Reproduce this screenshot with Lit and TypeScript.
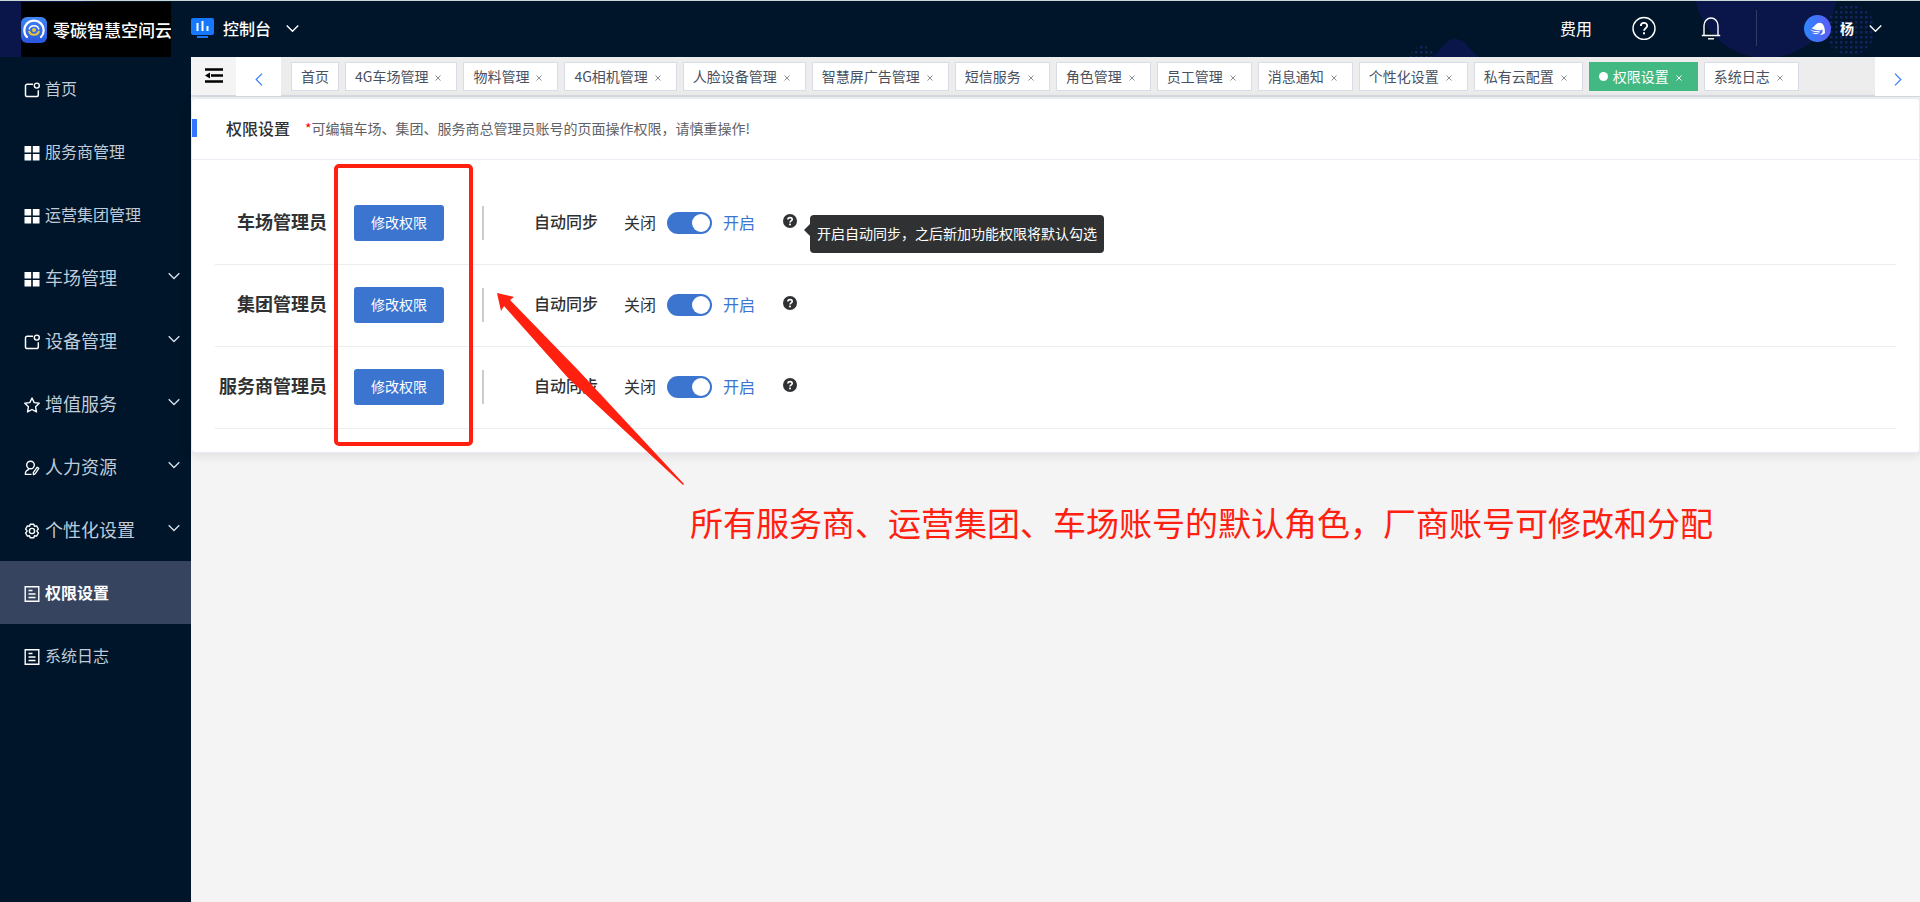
import { LitElement, html, css, svg, TemplateResult } from "lit";
import { customElement, property } from "lit/decorators.js";
import { classMap } from "lit/directives/class-map.js";

const icons: Record<string, TemplateResult> = {
  app: svg`<path d="M9 2.200H3.200a1.700 1.700 0 0 0-1.700 1.700v9a1.700 1.700 0 0 0 1.700 1.700h9.400a1.700 1.700 0 0 0 1.700-1.700V8.200" fill="none" stroke="currentColor" stroke-width="1.500"/><circle cx="12.800" cy="3.600" r="2.500" fill="none" stroke="currentColor" stroke-width="1.400"/>`,
  grid: svg`<path d="M.5 1h6.700v6.500H.5zM8.800 1h6.700v6.500H8.800zM.5 9h6.700v6.500H.5zM8.800 9h6.700v6.500H8.800z" fill="currentColor"/>`,
  star: svg`<path d="M8 1l2.200 4.600 5 .7-3.600 3.500.9 5.100L8 12.500l-4.500 2.400.9-5.100L.8 6.300l5-.7z" fill="none" stroke="currentColor" stroke-width="1.400" stroke-linejoin="round"/>`,
  person: svg`<circle cx="6.500" cy="5" r="3.800" fill="none" stroke="currentColor" stroke-width="1.400"/><path d="M5 9.300C2.600 10 1.300 11.800 1.300 14.300H7.500M13.200 7.200l1.600 1.100-3.500 5.300-1.900 1.100-.1-2z" fill="none" stroke="currentColor" stroke-width="1.300" stroke-linejoin="round"/>`,
  gear: svg`<path d="M6.200 1.200h3.600l.7 2 2.100-.3 1.800 3.100L13 7.600v.8l1.400 1.600-1.800 3.100-2.100-.3-.7 2H6.200l-.7-2-2.100.3L1.600 10 3 8.400v-.8L1.600 6l1.800-3.100 2.100.3z" fill="none" stroke="currentColor" stroke-width="1.400" stroke-linejoin="round"/><circle cx="8" cy="8" r="2.600" fill="none" stroke="currentColor" stroke-width="1.400"/>`,
  doc: svg`<path d="M1.200.8h13.600v14.400H1.200z" fill="none" stroke="currentColor" stroke-width="1.400"/><path d="M4.500 4.500h4M4.500 8h7M4.500 11.500h7" fill="none" stroke="currentColor" stroke-width="1.400"/>`,
};

const chevron = html`<svg class="chevron" viewBox="0 0 12 8" aria-hidden="true"><path d="M.7 1.200L6 6.500l5.300-5.300" fill="none" stroke="currentColor" stroke-width="1.300"/></svg>`;

const font = css`"Noto Sans CJK SC", "Microsoft YaHei", sans-serif`;

const reset = css`
  :host { display: block; font-family: ${font}; }
  * { box-sizing: border-box; }
  button { font: inherit; border: 0; padding: 0; background: none; color: inherit; cursor: pointer; }
  a { color: inherit; text-decoration: none; }
  svg { display: block; flex: none; }
`;

@customElement("top-bar")
class TopBar extends LitElement {
  static styles = [reset, css`
    .bar { position: relative; display: flex; align-items: center; height: 57px; background: #001529; color: #fff; border-top: 1px solid #c9d8d6; overflow: hidden; }
    .backdrop { position: absolute; right: 0; top: 0; width: 540px; height: 56px; }
    .brand { display: flex; width: 191px; height: 56px; padding: 1px 20px 0 21px; background: linear-gradient(90deg, #0a164a 85px, #001529 85px); }
    .logo { display: flex; align-items: center; gap: 6px; width: 150px; background: #000; font-size: 17px; line-height: 24px; font-weight: 500; white-space: nowrap; overflow: hidden; }
    .logo svg { width: 26px; height: 26px; }
    .console { display: flex; align-items: center; gap: 9px; padding-bottom: 2px; font-size: 16px; line-height: 24px; font-weight: 500; }
    .console .screen { width: 23px; height: 20px; }
    .chevron { width: 13px; height: 9px; }
    .console .chevron { margin-left: 6px; }
    .tools { position: relative; display: flex; align-items: center; margin-left: auto; padding: 0 38px 2px 0; font-size: 16px; line-height: 24px; }
    .help { margin-left: 40px; }
    .help svg { width: 24px; height: 24px; }
    .bell { margin-left: 45px; }
    .bell svg { width: 20px; height: 24px; }
    .rule { width: 1px; height: 36px; margin-left: 35px; background: #333b61; }
    .user { display: flex; align-items: center; margin-left: 47px; font-size: 14px; font-weight: 700; }
    .user span { margin: 0 15px 0 9px; }
    .user .face { width: 27px; height: 27px; }
  `];
  render() {
    return html`
      <header class="bar">
        <svg class="backdrop" viewBox="0 0 540 56" aria-hidden="true">
          <defs><pattern id="dots" width="5" height="5" patternUnits="userSpaceOnUse"><rect width="2.500" height="2.500" fill="#14235f"/></pattern></defs>
          <circle cx="386" cy="-15" r="72" fill="#0a164a"/>
          <circle cx="470" cy="29" r="25" fill="url(#dots)"/>
          <path d="M42 42l24 20H20z" fill="url(#dots)"/>
          <path d="M48 57C62 52 64 38 75 38s14 12 26 19z" fill="#0a164a"/>
        </svg>
        <div class="brand">
          <a class="logo" href="#home">
            <svg viewBox="0 0 26 26" aria-hidden="true">
              <defs><linearGradient id="lg" x2="0" y2="1"><stop stop-color="#3f86f3"/><stop offset="1" stop-color="#2a56dc"/></linearGradient></defs>
              <rect width="26" height="26" rx="6" fill="url(#lg)"/>
              <path d="M6 20A9.700 9.700 0 1 1 20 20" fill="none" stroke="#fff" stroke-width="2.200" stroke-linecap="round"/>
              <path d="M8 12.500a5.200 5.200 0 0 1 10 0" fill="none" stroke="#fff" stroke-width="1.400"/>
              <path d="M8 14a5.200 5.200 0 0 0 10 0" fill="none" stroke="#e8c53a" stroke-width="2.200"/>
              <circle cx="13" cy="13" r="2" fill="#e8c53a"/>
            </svg>
            零碳智慧空间云
          </a>
        </div>
        <button class="console">
          <svg class="screen" viewBox="0 0 23 20" aria-hidden="true">
            <rect width="23" height="17" rx="2" fill="#1677ff"/><rect x="6" y="18" width="11" height="2" fill="#1677ff"/>
            <path d="M6.500 5v8M11.500 3v10M16.500 8v5" stroke="#fff" stroke-width="2"/>
          </svg>
          控制台 ${chevron}
        </button>
        <div class="tools">
          <a href="#fees">费用</a>
          <button class="help" aria-label="帮助">
            <svg viewBox="0 0 24 24"><circle cx="12" cy="12.500" r="11" fill="none" stroke="#fff" stroke-width="1.400"/><path d="M8.800 10.100c0-4.200 6.400-4.200 6.400-.3 0 2.300-3.200 2.500-3.200 5" fill="none" stroke="#fff" stroke-width="1.800"/><rect x="11" y="16.300" width="2" height="2" fill="#fff"/></svg>
          </button>
          <button class="bell" aria-label="通知">
            <svg viewBox="0 0 20 24"><path d="M.8 19.500h18.400M3 19.500V9.500a7 7.500 0 0 1 14 0v10" fill="none" stroke="#fff" stroke-width="1.400"/><path d="M7 22.800h6" stroke="#fff" stroke-width="1.400"/></svg>
          </button>
          <i class="rule"></i>
          <button class="user">
            <svg class="face" viewBox="0 0 27 27" aria-hidden="true">
              <defs><linearGradient id="av" x2="1"><stop stop-color="#2f86ff"/><stop offset="1" stop-color="#5b5cf6"/></linearGradient></defs>
              <circle cx="13.500" cy="13.500" r="13.500" fill="url(#av)"/>
              <path d="M7.500 13C11 12 11.500 8 15.500 7.800c4 0 5.500 4.700 5.500 10.200-2 1.500-3 1.800-5.500 2 3-1.500 3.500-3.500 3-5.500-2.500 1.500-7 1-11-1.500z" fill="#fff"/>
              <path d="M6 14.200c3 1.700 7.500 2.600 11 1.300-2.500 2.500-8 2.300-11-1.300zM8 17.500c2.500 1 6 .7 8-.7-1.500 2.700-5.500 3.200-8 .7z" fill="#fff"/>
            </svg>
            <span>杨</span>${chevron}
          </button>
        </div>
      </header>`;
  }
}

interface Item { label: string; icon: string; children?: boolean; active?: boolean }

@customElement("side-menu")
class SideMenu extends LitElement {
  items: Item[] = [
    { label: "首页", icon: "app" },
    { label: "服务商管理", icon: "grid" },
    { label: "运营集团管理", icon: "grid" },
    { label: "车场管理", icon: "grid", children: true },
    { label: "设备管理", icon: "app", children: true },
    { label: "增值服务", icon: "star", children: true },
    { label: "人力资源", icon: "person", children: true },
    { label: "个性化设置", icon: "gear", children: true },
    { label: "权限设置", icon: "doc", active: true },
    { label: "系统日志", icon: "doc" },
  ];
  static styles = [reset, css`
    nav { height: 100%; background: #001529; color: #bfcbd9; }
    .item { display: flex; align-items: center; gap: 5px; height: 63px; padding: 0 11px 0 24px; font-size: 16px; line-height: 24px; }
    .item.parent { font-size: 18px; }
    .item.active { background: #37445f; color: #fff; font-weight: 700; }
    .item span { padding-bottom: 2px; }
    .icon { width: 16px; height: 16px; color: #fff; margin-top: 2px; }
    .chevron { width: 12px; height: 8px; margin: 0 0 3px auto; color: #dbe2ea; }
  `];
  render() {
    return html`<nav>${this.items.map((i) => html`
      <a href="#" class=${classMap({ item: true, parent: !!i.children, active: !!i.active })}>
        <svg class="icon" viewBox="0 0 16 16" aria-hidden="true">${icons[i.icon]}</svg>
        <span>${i.label}</span>${i.children ? chevron : ""}
      </a>`)}</nav>`;
  }
}

@customElement("tab-strip")
class TabStrip extends LitElement {
  tabs = ["首页", "4G车场管理", "物料管理", "4G相机管理", "人脸设备管理", "智慧屏广告管理", "短信服务", "角色管理", "员工管理", "消息通知", "个性化设置", "私有云配置", "权限设置", "系统日志"];
  static styles = [reset, css`
    .strip { display: flex; height: 40px; background: #ededed; border-bottom: 2px solid #d8dce5; }
    .fold { width: 45px; flex: none; background: #f4f4f4; display: flex; justify-content: center; padding-top: 11px; }
    .fold svg { width: 18px; height: 16px; }
    .move { width: 45px; height: 39px; flex: none; background: #fff; display: flex; align-items: center; justify-content: center; padding-top: 6px; color: #3a7bff; }
    .move svg { width: 8px; height: 13px; }
    .tabs { flex: 1; min-width: 0; overflow: hidden; display: flex; gap: 6px; padding: 5px 10px 0; }
    .tab { display: flex; align-items: center; flex: none; height: 29px; padding: 0 9px; background: #fff; border: 1px solid #d8dce5; color: #495060; font-size: 14px; line-height: 20px; white-space: nowrap; }
    .tab a { padding-bottom: 2px; }
    .tab.current { background: #42b983; border-color: #42b983; color: #fff; }
    .dot { width: 9px; height: 9px; border-radius: 50%; background: #fff; margin-right: 5px; }
    .close { width: 16px; margin: 0 1px 0 2px; line-height: 20px; color: #8a8f99; }
    .close svg { width: 6px; height: 6px; margin: 2px auto 0; }
    .current .close { color: #fff; }
  `];
  render() {
    return html`<div class="strip">
      <button class="fold" aria-label="收起菜单"><svg viewBox="0 0 18 16"><path d="M0 1.500h18M6 7.500h12M0 13.500h18" stroke="#000" stroke-width="2.400"/><path d="M0 7.500l5-3v6z" fill="#000"/></svg></button>
      <button class="move" aria-label="向左"><svg viewBox="0 0 8 13"><path d="M7 .7L1.200 6.500 7 12.300" fill="none" stroke="currentColor" stroke-width="1.200"/></svg></button>
      <div class="tabs">${this.tabs.map((t, n) => html`
        <div class=${classMap({ tab: true, current: t === "权限设置" })}>
          ${t === "权限设置" ? html`<i class="dot"></i>` : ""}<a href="#">${t}</a>${n ? html`<button class="close" aria-label="关闭${t}"><svg viewBox="0 0 6 6"><path d="M.5.5l5 5M5.500.5l-5 5" stroke="currentColor"/></svg></button>` : ""}
        </div>`)}</div>
      <button class="move" aria-label="向右"><svg viewBox="0 0 8 13"><path d="M1 .7l5.800 5.800L1 12.300" fill="none" stroke="currentColor" stroke-width="1.200"/></svg></button>
    </div>`;
  }
}

@customElement("role-row")
class RoleRow extends LitElement {
  @property() name = "";
  @property() tip = "";
  static styles = [reset, css`
    .row { display: flex; align-items: center; height: 82px; padding-bottom: 2px; border-bottom: 1px solid #ebeef0; font-size: 16px; line-height: 24px; color: #303133; }
    .name { width: 112px; padding-bottom: 4px; text-align: right; font-size: 18px; font-weight: 700; white-space: nowrap; flex: none; }
    .edit { width: 90px; height: 36px; flex: none; margin-left: 27px; padding-bottom: 2px; border-radius: 3px; background: #3c75d0; color: #fff; font-size: 14px; line-height: 20px; }
    .rule { width: 2px; height: 34px; flex: none; margin: 0 50px 0 38px; background: #ccc; }
    .sync { padding-bottom: 4px; font-weight: 500; }
    .off { margin: 0 11px 0 26px; padding-bottom: 2px; }
    .on { margin-left: 11px; padding-bottom: 2px; color: #3c75d0; }
    input { appearance: none; width: 45px; height: 22px; margin: 0; border-radius: 11px; background: #ccc; padding: 2px; display: flex; cursor: pointer; }
    input::before { content: ""; width: 18px; height: 18px; border-radius: 50%; background: #fff; }
    input:checked { background: #3c75d0; justify-content: flex-end; }
    .hint { position: relative; margin-left: 28px; padding-bottom: 4px; }
    .hint > svg { width: 14px; height: 14px; }
    .tip { position: absolute; left: 27px; top: 1px; height: 38px; padding: 8px 7px; border-radius: 4px; background: #303133; color: #fff; font-size: 14px; line-height: 20px; white-space: nowrap; }
    .tip::before { content: ""; position: absolute; left: -6px; top: 9px; border: 6px solid transparent; border-left: 0; border-right-color: #303133; }
  `];
  render() {
    return html`<div class="row">
      <span class="name">${this.name}</span>
      <button class="edit">修改权限</button>
      <i class="rule"></i>
      <label class="sync" for="sync">自动同步</label>
      <span class="off">关闭</span>
      <input id="sync" type="checkbox" role="switch" checked>
      <span class="on">开启</span>
      <div class="hint">
        <svg viewBox="0 0 14 14" aria-hidden="true"><circle cx="7" cy="7" r="7" fill="#303133"/><path d="M4.900 5.600c0-2.700 4.300-2.700 4.300-.2 0 1.500-2.200 1.500-2.200 3.200" fill="none" stroke="#fff" stroke-width="1.700"/><rect x="6.100" y="9.600" width="1.800" height="1.700" fill="#fff"/></svg>
        ${this.tip ? html`<div class="tip" role="tooltip">${this.tip}</div>` : ""}
      </div>
    </div>`;
  }
}

@customElement("app-root")
class AppRoot extends LitElement {
  static styles = [reset, css`
    :host { position: relative; display: flex; flex-direction: column; min-height: 100vh; background: #f4f4f4; }
    .body { flex: 1; display: grid; grid-template-columns: 191px minmax(0, 1fr); }
    .panel { margin: 1px 0 0 1px; background: #fff; border: 1px solid #e6ebf5; border-left: 0; border-radius: 4px; box-shadow: 0 2px 12px rgba(0, 0, 0, 0.1); }
    .head { display: flex; align-items: center; height: 61px; padding-bottom: 2px; border-bottom: 1px solid #ebeef5; }
    .mark { width: 5px; height: 18px; background: #3376ff; }
    h1 { margin: 0 15px 0 29px; padding-bottom: 1px; font-size: 16px; line-height: 24px; font-weight: 500; color: #303133; }
    .note { margin: 0; font-size: 14px; line-height: 20px; color: #606266; }
    .note b { color: #f00; font-weight: 400; }
    .rows { padding: 23px; }
    .frame { position: absolute; left: 334px; top: 164px; width: 139px; height: 282px; border: 4px solid #ff2010; border-radius: 5px; pointer-events: none; }
    .arrow { position: absolute; left: 490px; top: 285px; width: 200px; height: 205px; pointer-events: none; }
    .remark { position: absolute; left: 690px; top: 498px; margin: 0; font-size: 33px; line-height: 48px; color: #ff2010; white-space: nowrap; }
  `];
  render() {
    return html`
      <top-bar></top-bar>
      <div class="body">
        <side-menu></side-menu>
        <main>
          <tab-strip></tab-strip>
          <section class="panel">
            <div class="head"><i class="mark"></i><h1>权限设置</h1><p class="note"><b>*</b>可编辑车场、集团、服务商总管理员账号的页面操作权限，请慎重操作!</p></div>
            <div class="rows">
              <role-row name="车场管理员" tip="开启自动同步，之后新加功能权限将默认勾选"></role-row>
              <role-row name="集团管理员"></role-row>
              <role-row name="服务商管理员"></role-row>
            </div>
          </section>
        </main>
      </div>
      <div class="frame"></div>
      <svg class="arrow" viewBox="0 0 200 205" aria-hidden="true"><path d="M7 8l17 4-4 3 68 70 106 114-1 1L79 94 14 21l-3 5z" fill="#ff2010"/></svg>
      <p class="remark">所有服务商、运营集团、车场账号的默认角色，厂商账号可修改和分配</p>`;
  }
}
